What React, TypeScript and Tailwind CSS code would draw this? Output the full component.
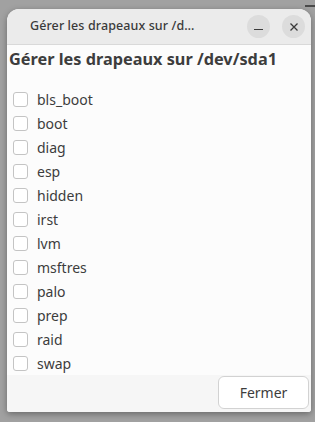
const flags = ['bls_boot', 'boot', 'diag', 'esp', 'hidden', 'irst', 'lvm', 'msftres', 'palo', 'prep', 'raid', 'swap'];

export default function App() {
  return (
    <div
      className="relative h-[422px] w-[315px] overflow-hidden bg-[#a1a1a1] pl-[7px] pt-[9px]"
      style={{ fontFamily: '"Noto Sans", "Open Sans", sans-serif' }}
    >
      <div className="absolute right-0 top-[5px] h-[2px] w-[10px] bg-[#4a4a4a]" />
      <div className="flex h-[403px] w-[304px] flex-col overflow-hidden rounded-t-[12px] rounded-b-[3px] bg-[#fafafa] shadow-[0_2px_6px_rgba(0,0,0,0.35)]">
        <div className="flex h-[36px] shrink-0 items-center border-b border-[#d9d9d9] bg-[#ebebeb]">
          <div className="flex-1 pl-[23px] text-[12.5px] font-medium tracking-[0.1px] text-[#3a3a3a]">Gérer les drapeaux sur /d…</div>
          <div className="mr-[12px] flex h-[23px] w-[23px] items-center justify-center rounded-full bg-[#dcdcdc]">
            <div className="mt-[6px] h-px w-[9px] bg-[#3a3a3a]" />
          </div>
          <div className="mr-[6px] flex h-[23px] w-[23px] items-center justify-center rounded-full bg-[#dcdcdc]">
            <svg width="10" height="10" viewBox="0 0 10 10" fill="none" stroke="#3a3a3a" strokeWidth="1.3">
              <path d="M1.5 1.5 L8.5 8.5 M8.5 1.5 L1.5 8.5" />
            </svg>
          </div>
        </div>
        <div className="flex flex-1 flex-col bg-[#fcfcfc]">
          <div className="pl-[2px] pt-[2px] text-[16.3px] font-bold leading-[24px] text-[#3d3d3d]">Gérer les drapeaux sur /dev/sda1</div>
          <div className="mt-[16px] flex flex-col pl-[6px]">
            {flags.map((f) => (
              <label key={f} className="flex h-[24px] items-center gap-[9px]">
                <span className="h-[15px] w-[15px] rounded-[3px] border border-[#c4c4c4] bg-white" />
                <span className="text-[14px] text-[#3d3d3d]">{f}</span>
              </label>
            ))}
          </div>
        </div>
        <div className="flex h-[37px] shrink-0 items-start justify-end bg-[#f6f6f6] pr-[2px] pt-[1px]">
          <button className="h-[33px] w-[91px] rounded-[6px] border border-[#d2d2d2] bg-white text-[14px] text-[#3d3d3d]">
            Fermer
          </button>
        </div>
      </div>
    </div>
  );
}
